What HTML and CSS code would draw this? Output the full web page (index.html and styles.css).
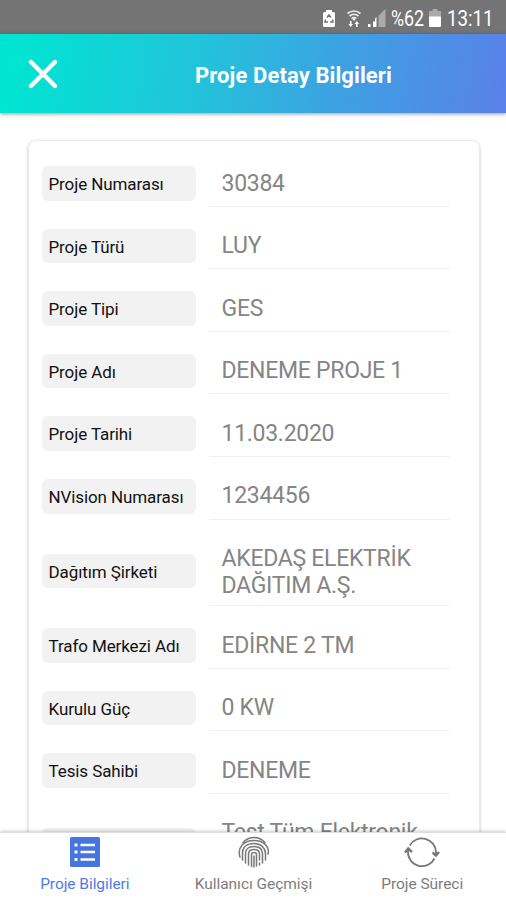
FILE: index.html
```html
<!DOCTYPE html>
<html lang="tr">
<head>
<meta charset="utf-8">
<title>Proje Detay Bilgileri</title>
<link rel="stylesheet" href="styles.css">
</head>
<body>
<div class="screen">
  <div class="status">
    <svg class="s-save" width="14" height="19" viewBox="0 0 14 19"><path fill="#fff" d="M4 1h6v2h1.500Q13 3 13 4.500V16.500Q13 18 11.500 18h-9Q1 18 1 16.500V4.500Q1 3 2.500 3H4z"/><path d="M5 8.500 7 6l2 2.500M3.500 10.500 3 13h3M10.500 10.500 11 13H8" fill="none" stroke="#747474" stroke-width="1.500"/></svg>
    <svg class="s-wifi" width="16" height="19" viewBox="0 0 16 19"><g fill="none" stroke="#eee" stroke-width="1.600"><path d="M1.500 4.500Q8-.5 14.500 4.500M3.500 7Q8 3.500 12.500 7M5.500 9.500Q8 7.500 10.500 9.500"/></g><path fill="#fff" d="m6.500 10 1.500-1 1.500 1L8 12zM5.500 12v3H7l-2.300 3-2.300-3H4v-3zM10 18v-3H8.500l2.300-3 2.300 3h-1.500v3z"/></svg>
    <svg class="s-signal" width="18" height="18" viewBox="0 0 18 18"><path fill="#fff" d="M0 15h2.500v3H0zM5 12.500h2.500V18H5zM7 9.500l1.500-1.500v10H7z"/><path fill="#aaa" d="M10.500 6.500 13 4.500V18h-2.500zM13 4 17.500 0v18H13z"/></svg>
    <span class="percent">%62</span>
    <svg class="s-bat" width="12" height="18" viewBox="0 0 12 18"><path fill="#aaa" d="M3.500 0h5v2H12v6H0V2h3.500z"/><path fill="#fff" d="M0 7.500h12V17q0 1-1 1H1q-1 0-1-1z"/></svg>
    <span class="clock">13:11</span>
  </div>
  <header class="bar">
    <svg class="close" width="30" height="30" viewBox="0 0 30 30"><path d="M3 3 27 27M27 3 3 27" stroke="#fff" stroke-width="4.400" stroke-linecap="round"/></svg>
    <h1>Proje Detay Bilgileri</h1>
  </header>
  <main class="content">
    <section class="card">
      <div class="row"><div class="label">Proje Numarası</div><div class="value">30384</div></div>
      <div class="row"><div class="label">Proje Türü</div><div class="value">LUY</div></div>
      <div class="row"><div class="label">Proje Tipi</div><div class="value">GES</div></div>
      <div class="row"><div class="label">Proje Adı</div><div class="value">DENEME PROJE 1</div></div>
      <div class="row"><div class="label">Proje Tarihi</div><div class="value">11.03.2020</div></div>
      <div class="row"><div class="label">NVision Numarası</div><div class="value">1234456</div></div>
      <div class="row"><div class="label">Dağıtım Şirketi</div><div class="value tall">AKEDAŞ ELEKTRİK<br>DAĞITIM A.Ş.</div></div>
      <div class="row"><div class="label">Trafo Merkezi Adı</div><div class="value">EDİRNE 2 TM</div></div>
      <div class="row"><div class="label">Kurulu Güç</div><div class="value">0 KW</div></div>
      <div class="row"><div class="label">Tesis Sahibi</div><div class="value">DENEME</div></div>
      <div class="row"><div class="label"></div><div class="value tall">Test Tüm Elektronik</div></div>
    </section>
  </main>
  <nav class="tabs">
    <div class="tab active">
      <svg width="32" height="32" viewBox="0 0 32 32"><rect x="1" y="1" width="30" height="30" rx="1.500" fill="#4675e0"/><path d="M11.500 9H26M11.500 16H26M11.500 23.500H26" stroke="#fff" stroke-width="2.400"/><path d="M5.500 9h3M5.500 16h3M5.500 23.500h3" stroke="#fff" stroke-width="3"/></svg>
      <span>Proje Bilgileri</span>
    </div>
    <div class="tab">
      <svg width="32" height="32" viewBox="0 0 32 32"><g fill="none" stroke="#777" stroke-width="1.500" stroke-linecap="round"><path d="M5 6.500Q9.500 1.500 16 1.500T27 6.500"/><path d="M2 21C-1 11 6 4.500 16 4.500S32 11 30 18"/><path d="M4.500 24V17C4.500 11 9 7.500 16 7.500S27.500 12 27.500 18V24"/><path d="M7.500 27V17.500C7.500 13 11 10.500 16 10.500S24.500 13 24.500 18V27"/><path d="M10.500 29V18C10.500 15 13 13.500 16 13.500S21.500 15 21.500 18V24"/><path d="M13.500 30.500V18.500Q13.500 16.500 16 16.500T18.500 18.500V30"/><path d="M16 20V31M21.500 27V29"/></g></svg>
      <span>Kullanıcı Geçmişi</span>
    </div>
    <div class="tab">
      <svg width="36" height="32" viewBox="0 0 36 32"><g fill="none" stroke="#777" stroke-width="1.800"><path d="M5.800 9.500A14 14 0 0 1 32 16V18.500M30.500 22.500A14 14 0 0 1 4 16V13"/><path d="M1 16.500 4.200 12.500 8 16M28.500 16.500 32 19.500 35 16" stroke-width="2.400"/></g></svg>
      <span>Proje Süreci</span>
    </div>
  </nav>
</div>
</body>
</html>
```
FILE: styles.css
```css
* { box-sizing: border-box; }
body { margin: 0; font-family: Roboto, "Liberation Sans", sans-serif; background: #fff; }
.screen { width: 506px; height: 900px; display: flex; flex-direction: column; overflow: hidden; }
.status { height: 34px; flex: none; background: #747474; color: #fff; display: flex; align-items: center; justify-content: flex-end; padding: 2px 13px 0 0; font-size: 21.500px; }
.s-save { margin-right: 10px; }
.s-wifi { margin-right: 6px; }
.s-signal { margin-right: 5px; }
.percent { width: 34px; margin-right: 4px; transform: scaleX(.83); transform-origin: left; }
.s-bat { margin-right: 6px; }
.clock { width: 46px; transform: scaleX(.87); transform-origin: left; white-space: nowrap; }
.bar { height: 79px; flex: none; display: flex; align-items: center; padding: 3px 0 0 28px; background: linear-gradient(100deg, #00e5d1 3%, #23c2db 40%, #3ea0e2 68%, #5a80e8 100%); box-shadow: 0 1px 4px rgba(0,0,0,.4); position: relative; }
.close { margin-bottom: 2px; }
.bar h1 { margin: 0 0 0 137px; font-size: 22px; font-weight: 700; letter-spacing: .1px; color: #fff; white-space: nowrap; }
.content { flex: 1; min-height: 0; overflow: hidden; padding: 27px 26px 0 28px; }
.card { height: 760px; border: 1px solid #ebebeb; border-radius: 8px; box-shadow: 0 1px 3px rgba(0,0,0,.24); padding: 19px 29px 0 13px; }
.row { display: flex; align-items: center; margin-bottom: 16px; }
.label { width: 154px; height: 34.500px; flex: none; border-radius: 6px; background: #f2f2f2; color: #111; font-size: 17px; line-height: 37.500px; letter-spacing: -.1px; padding-left: 6.500px; margin-right: 13px; white-space: nowrap; }
.value { flex: 1; height: 46.600px; border-bottom: 1px solid #f1f1f1; padding: 9.500px 0 0 12.500px; color: #858585; font-size: 23px; line-height: 27px; letter-spacing: -.28px; white-space: nowrap; }
.value.tall { height: 70.600px; }
.tabs { height: 68px; flex: none; display: flex; background: #fff; border-top: 1px solid #ddd; box-shadow: 0 -1px 3px rgba(0,0,0,.2); position: relative; }
.tab { flex: 1; display: flex; flex-direction: column; align-items: center; padding: 3px 0 0 1px; color: #7d7d7d; font-size: 15.500px; }
.tab.active { color: #4e7be5; }
.tab span { margin-top: 7px; line-height: 18px; letter-spacing: -.05px; white-space: nowrap; }
```
